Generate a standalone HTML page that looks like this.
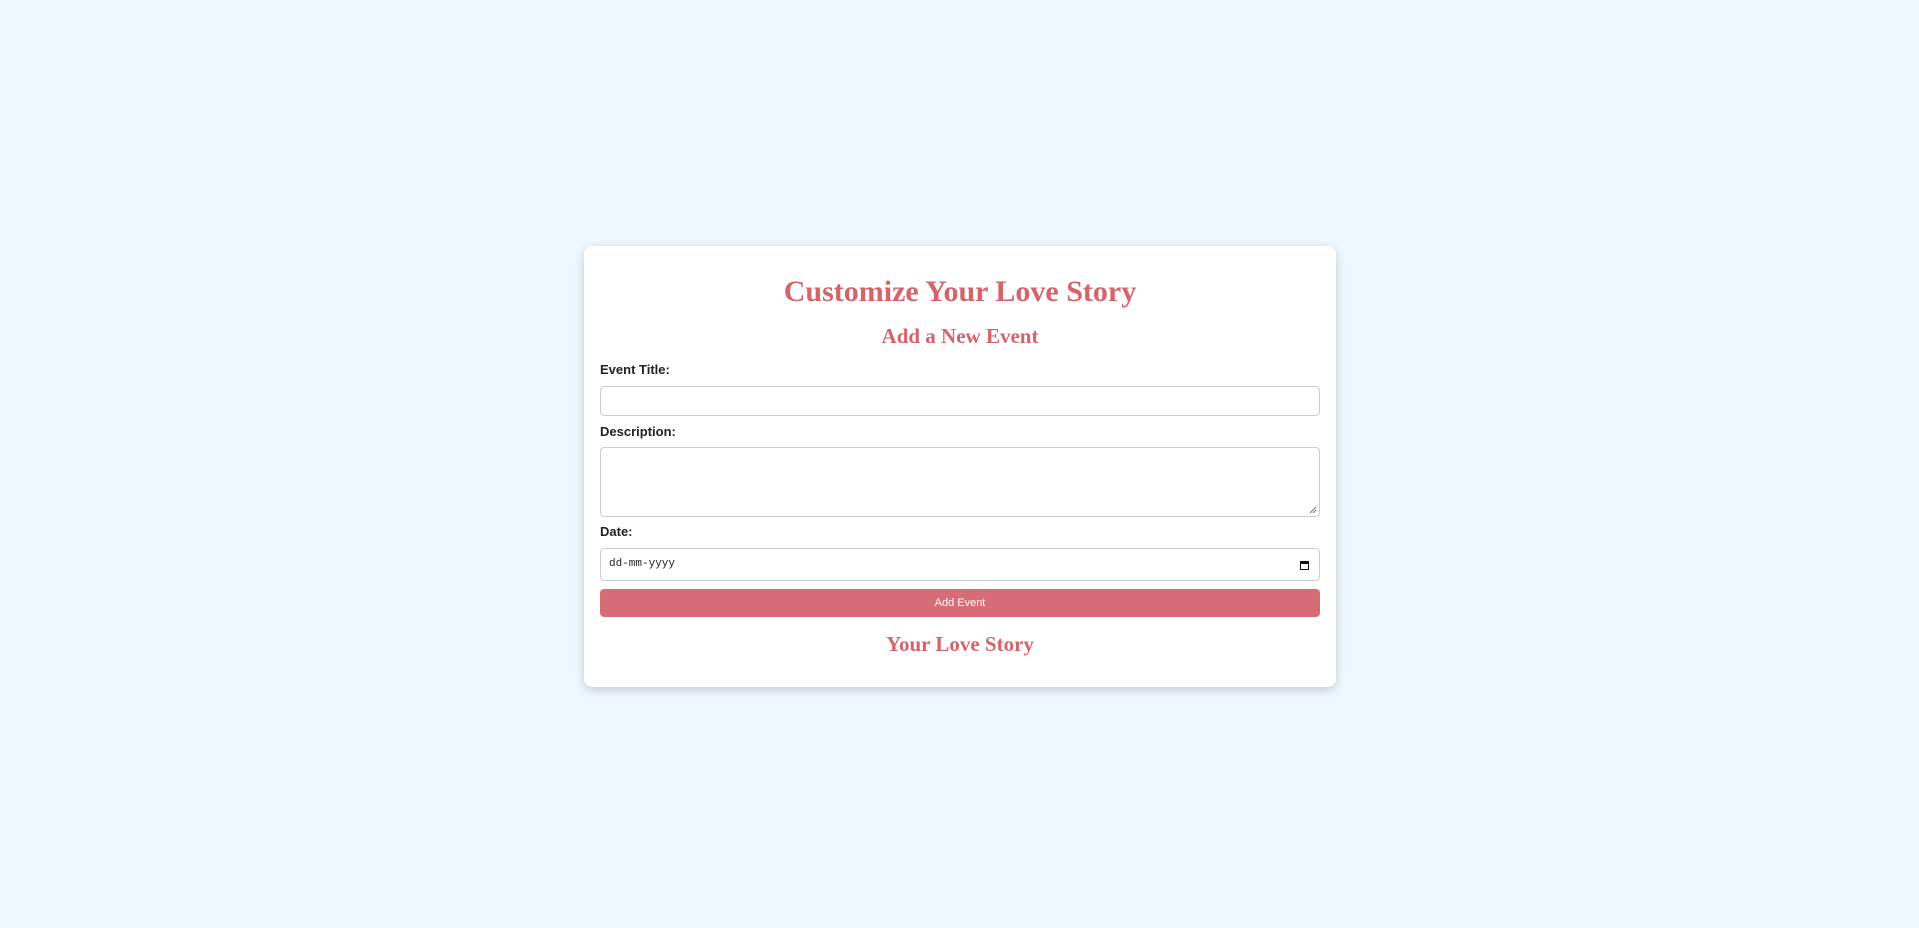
<!DOCTYPE html>
<html><head><style>
html,body{margin:0;height:100%;background:#eef6fe;}
body{position:relative;font-family:"Liberation Sans",Arial,sans-serif;}
.card{position:absolute;left:584px;top:246px;width:752px;height:441px;background:#fff;border-radius:8px;box-shadow:0 3px 10px rgba(0,0,0,0.18);box-sizing:border-box;}
.t{position:absolute;left:0;width:100%;text-align:center;color:#d5636b;font-family:"Liberation Serif",Georgia,serif;font-weight:bold;}
.l{position:absolute;left:16px;font-size:13px;font-weight:bold;color:#222;}
.i{position:absolute;left:16px;width:720px;box-sizing:border-box;border:1px solid #ccc;border-radius:4px;background:#fff;}
.btn{position:absolute;left:16px;width:720px;height:28px;background:#d66c75;border-radius:4px;color:#fff;font-size:11px;text-align:center;line-height:28px;}
</style></head><body>
<div class="card">
<div class="t" style="top:28px;font-size:30px;line-height:36px;">Customize Your Love Story</div>
<div class="t" style="top:77px;font-size:21px;line-height:26px;">Add a New Event</div>
<div class="l" style="top:116px;">Event Title:</div>
<div class="i" style="top:140px;height:30px;"></div>
<div class="l" style="top:178px;">Description:</div>
<div class="i" style="top:201px;height:70px;"><svg style="position:absolute;right:2px;bottom:2px" width="8" height="8"><path d="M1 7L7 1M4 7L7 4" stroke="#777" stroke-width="1"/></svg></div>
<div class="l" style="top:278px;">Date:</div>
<div class="i" style="top:302px;height:33px;font-family:'Liberation Mono',monospace;font-size:11px;line-height:31px;padding-left:8px;color:#222;">dd-mm-yyyy<svg style="position:absolute;right:10px;top:11px" width="9" height="10"><rect x="0.5" y="1.5" width="8" height="8" fill="none" stroke="#111"/><rect x="0.5" y="1.5" width="8" height="2.5" fill="#111"/></svg></div>
<div class="btn" style="top:343px;">Add Event</div>
<div class="t" style="top:385px;font-size:21px;line-height:26px;">Your Love Story</div>
</div>
</body></html>
